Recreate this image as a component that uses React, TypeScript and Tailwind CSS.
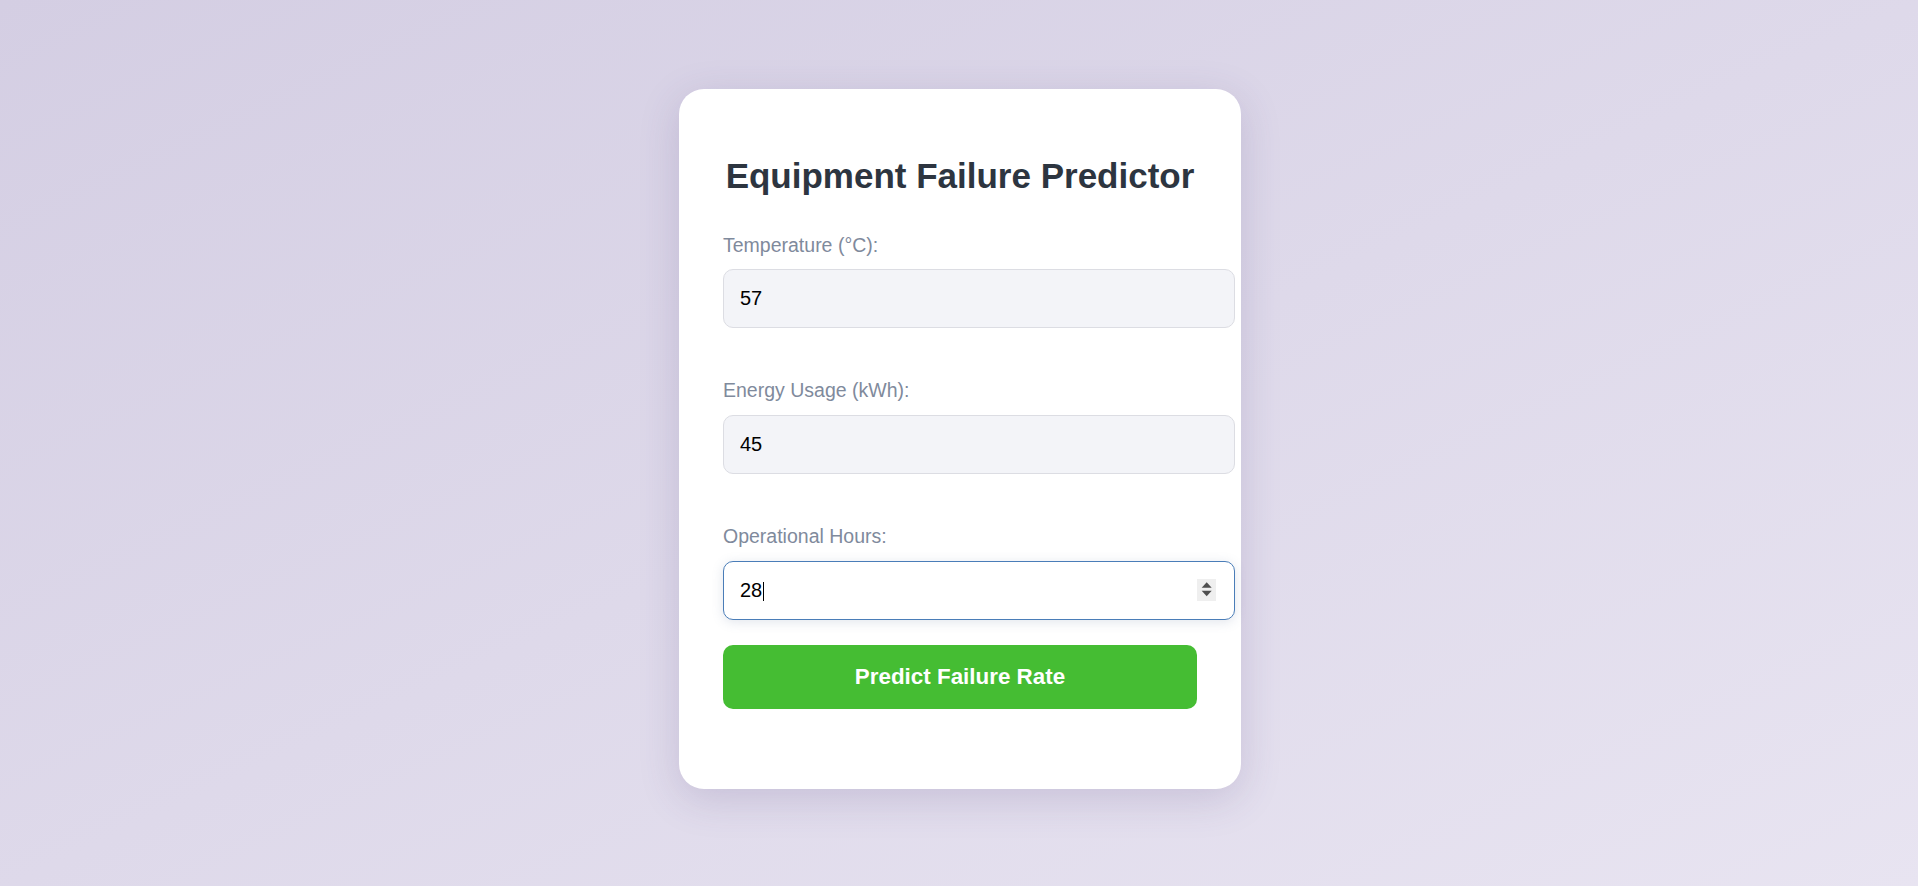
import React, { useState } from 'react'

const Field: React.FC<{
  label: string
  value: string
  onChange: (v: string) => void
  first?: boolean
  focused?: boolean
}> = ({ label, value, onChange, first, focused }) => {
  return (
    <div className={first ? 'flex flex-col' : 'mt-[51px] flex flex-col'}>
      <label
        className={
          first
            ? 'mb-[13px] block text-[19.5px] leading-[22px] text-[#7f8a9c]'
            : 'mb-[14px] block text-[19.5px] leading-[22px] text-[#7f8a9c]'
        }
      >
        {label}
      </label>
      <div className="relative w-[512px]">
        <input
          type="text"
          value={value}
          onChange={(e) => onChange(e.target.value)}
          className={
            focused
              ? 'block h-[59px] w-[512px] rounded-[10px] border border-[#4a7db8] bg-white px-[16px] text-[20px] text-black shadow-[0_2px_12px_rgba(90,110,150,0.18)] outline-none'
              : 'block h-[59px] w-[512px] rounded-[10px] border border-[#dcdde3] bg-[#f3f4f8] px-[16px] text-[20px] text-black outline-none'
          }
        />
        {focused && (
          <>
            {/* caret */}
            <span className="pointer-events-none absolute left-[40px] top-[21px] h-[19px] w-[1px] bg-black" />
            {/* spinner */}
            <span className="pointer-events-none absolute left-[474px] top-[18px] h-[22px] w-[19px] bg-[#efefef]">
              <svg width="19" height="22" viewBox="0 0 19 22">
                <path d="M4.7 8.7 L9.7 3.3 L14.7 8.7 Z" fill="#4f4f4f" />
                <path d="M4.7 11.7 L14.7 11.7 L9.7 17.3 Z" fill="#4f4f4f" />
              </svg>
            </span>
          </>
        )}
      </div>
    </div>
  )
}

const App: React.FC = () => {
  const [temperature, setTemperature] = useState('57')
  const [energy, setEnergy] = useState('45')
  const [hours, setHours] = useState('28')

  return (
    <div className="h-screen w-full overflow-hidden bg-gradient-to-br from-[#d4cee3] to-[#e8e4f1] pt-[89px] pl-[2px] font-['Liberation_Sans',Arial,sans-serif]">
      <div className="mx-auto w-[562px] rounded-[25px] bg-white px-[44px] pt-[44px] pb-[80px] shadow-[0_10px_40px_rgba(80,60,120,0.18)]">
        <h1 className="mt-[23px] text-center text-[35px] font-bold leading-[40px] text-[#2d3540]">
          Equipment Failure Predictor
        </h1>
        <form className="mt-[38px] flex flex-col" onSubmit={(e) => e.preventDefault()}>
          <Field first label="Temperature (°C):" value={temperature} onChange={setTemperature} />
          <Field label="Energy Usage (kWh):" value={energy} onChange={setEnergy} />
          <Field focused label="Operational Hours:" value={hours} onChange={setHours} />
          <button
            type="submit"
            className="mt-[25px] h-[64px] w-full rounded-[10px] bg-[#45bd33] text-[22.4px] font-bold text-white"
          >
            Predict Failure Rate
          </button>
        </form>
      </div>
    </div>
  )
}

export default App
